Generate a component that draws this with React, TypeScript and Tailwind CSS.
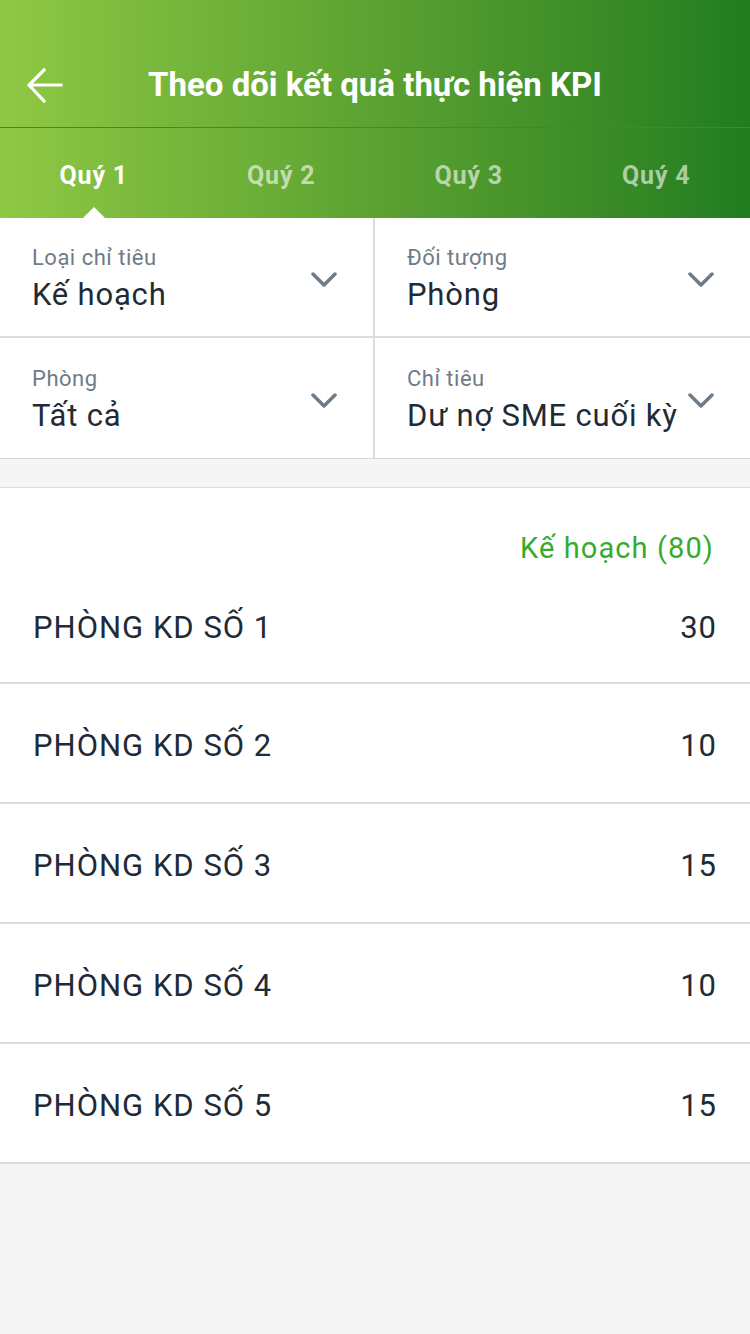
const font = { fontFamily: "Roboto, 'Noto Sans', sans-serif" };

const Chevron = () => (
	<svg width="26" height="18" viewBox="0 0 26 18" className="shrink-0 mt-[6px]">
		<path d="M2 3 L13 14 L24 3" fill="none" stroke="#6e7b88" strokeWidth="3.5" strokeLinecap="round" strokeLinejoin="round" />
	</svg>
);

const filters = [
	{ label: "Loại chỉ tiêu", value: "Kế hoạch" },
	{ label: "Đối tượng", value: "Phòng" },
	{ label: "Phòng", value: "Tất cả" },
	{ label: "Chỉ tiêu", value: "Dư nợ SME cuối kỳ" },
];

const rows = [
	{ name: "PHÒNG KD SỐ 1", value: 30 },
	{ name: "PHÒNG KD SỐ 2", value: 10 },
	{ name: "PHÒNG KD SỐ 3", value: 15 },
	{ name: "PHÒNG KD SỐ 4", value: 10 },
	{ name: "PHÒNG KD SỐ 5", value: 15 },
];

const tabs = ["Quý 1", "Quý 2", "Quý 3", "Quý 4"];

export default function App() {
	return (
		<div className="w-[750px] min-h-[1334px] bg-[#f4f5f4]" style={font}>
			{/* header + tabs */}
			<div className="bg-gradient-to-r from-[#8fc844] to-[#1f7d20]">
				<div className="relative h-[128px] flex items-center justify-center border-b border-[#3f8a2a]">
					<svg width="40" height="40" viewBox="0 0 40 40" className="absolute left-[25px] top-[66px]">
						<path d="M36 19 H6 M19 4 L4 19 L19 35" fill="none" stroke="white" strokeWidth="3.2" strokeLinecap="square" />
					</svg>
					<h1 className="mt-[42px] text-[33px] font-bold text-white">
						Theo dõi kết quả thực hiện KPI
					</h1>
				</div>
				<div className="grid grid-cols-4 h-[90px]">
					{tabs.map((t, i) => (
						<div key={t} className="relative flex items-center justify-center pt-[5px]">
							<span className={`text-[25px] font-bold tracking-[0.8px] ${i === 0 ? "text-white" : "text-white/60"}`}>{t}</span>
							{i === 0 && (
								<div className="absolute bottom-0 left-1/2 -translate-x-1/2 w-0 h-0 border-l-[11px] border-r-[11px] border-b-[11px] border-l-transparent border-r-transparent border-b-white" />
							)}
						</div>
					))}
				</div>
			</div>

			{/* filters */}
			<div className="grid grid-cols-2 bg-white border-b border-[#d9d9d9]">
				{filters.map((f, i) => (
					<div
						key={f.label}
						className={`h-[120px] flex items-center justify-between pl-[32px] pr-[36px] ${i % 2 === 0 ? "border-r-2 border-[#dcdcdc]" : ""} ${i < 2 ? "border-b-2 border-[#dcdcdc]" : ""}`}
					>
						<div className="flex flex-col pt-[7px]">
							<span className="text-[22px] text-[#6e7b88] leading-[28px] tracking-[0.5px]">{f.label}</span>
							<span className="text-[31px] text-[#222b35] leading-[45px] tracking-[0.8px] whitespace-nowrap">{f.value}</span>
						</div>
						<Chevron />
					</div>
				))}
			</div>

			<div className="h-[28px]" />

			{/* list */}
			<div className="bg-white border-t border-[#dcdcdc]">
				<div className="pt-[40px] pr-[36px] text-right text-[29px] text-[#34ac2e] leading-[40px] tracking-[1.1px]">Kế hoạch (80)</div>
				{rows.map((r, i) => (
					<div
						key={r.name}
						className={`flex items-center justify-between pl-[33px] pr-[33px] pt-[6px] border-b-2 border-[#dcdcdc] ${i === 0 ? "h-[116px]" : "h-[120px]"}`}
					>
						<span className="text-[31px] text-[#222b35] tracking-[1px]">{r.name}</span>
						<span className="text-[31px] text-[#222b35] tracking-[1px]">{r.value}</span>
					</div>
				))}
			</div>
		</div>
	);
}
